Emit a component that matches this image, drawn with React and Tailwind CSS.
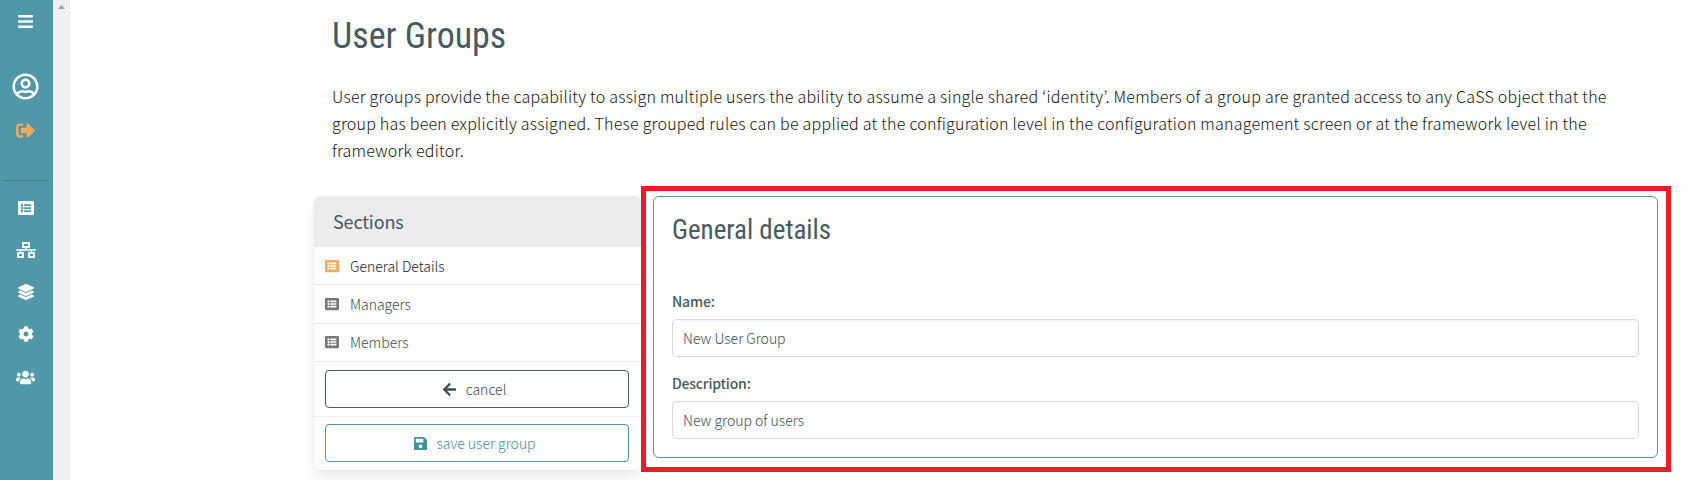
import React from 'react';
import { FaBars, FaRegUserCircle, FaSignOutAlt, FaListAlt, FaNetworkWired, FaLayerGroup, FaCog, FaUsers, FaArrowLeft, FaSave } from 'react-icons/fa';

function SectionRow({ label, active }) {
  return (
    <li className="flex h-[38.33px] items-center border-b border-[#ececec] pl-[11px]">
      <FaListAlt className={active ? 'size-[14px] text-[#f0ab61]' : 'size-[14px] text-[#777]'} />
      <span className={active ? 'ml-[11px] pt-[1px] font-light text-[#222]' : 'ml-[11px] pt-[1px] font-light text-[#3a4d53]'}>{label}</span>
    </li>
  );
}

function Field({ label, value }) {
  return (
    <label className="flex flex-col">
      <span className="h-[28px] text-[14px] leading-[20px] font-medium tracking-[-0.2px] text-[#465a61]">{label}</span>
      <input readOnly defaultValue={value} className="h-[38px] rounded-[4px] border border-[#dbdbdb] px-[10px] text-[14px] font-light text-[#3a4d53] shadow-[inset_0_1px_2px_rgba(10,10,10,0.05)]" />
    </label>
  );
}

export default function App() {
  return (
    <div className="flex h-[480px] w-[1708px] overflow-hidden bg-white font-['Noto_Sans_CJK_KR',sans-serif] text-[14px]">
      <nav className="flex w-[53px] shrink-0 flex-col items-center bg-[#5098a8] pr-[2px] text-white">
        <FaBars className="mt-[13px] size-[17px]" />
        <FaRegUserCircle className="mt-[43px] size-[27px]" />
        <FaSignOutAlt className="mt-[21px] size-[19px] text-[#f0ab61]" />
        <hr className="mt-[40px] ml-[1px] w-[46px] border-[#4f7884]" />
        <FaListAlt className="mt-[19px] size-[16px]" />
        <FaNetworkWired className="mt-[26px] h-[16px] w-[20px]" />
        <FaLayerGroup className="mt-[26px] size-[16px]" />
        <FaCog className="mt-[26px] size-[16px]" />
        <FaUsers className="mt-[26px] size-[19px]" />
      </nav>
      <div className="flex w-[17px] shrink-0 justify-center bg-[#f0f0f0] pt-[5px]">
        <svg className="h-[4px] w-[7px]" viewBox="0 0 7 4"><path d="M0 4 3.5 0 7 4z" fill="#a3a3a3" /></svg>
      </div>
      <main className="flex w-[1601px] flex-col pl-[244px]">
        <header className="h-[186px] shrink-0 pl-[18px]">
          <h1 className="pt-[14px] font-['Roboto_Condensed',Roboto,sans-serif] text-[36px] leading-[44px] font-normal text-[#465a61] [font-stretch:75%]">User Groups</h1>
          <p className="mt-[25px] text-[16px] leading-[27px] font-light tracking-[0.24px] whitespace-nowrap text-[#111]">
            User groups provide the capability to assign multiple users the ability to assume a single shared ‘identity’. Members of a group are granted access to any CaSS object that the<br />
            group has been explicitly assigned. These grouped rules can be applied at the configuration level in the configuration management screen or at the framework level in the<br />
            framework editor.
          </p>
        </header>
        <div className="flex items-start">
          <aside className="mt-[10px] h-[274px] w-[327px] rounded-[6px] shadow-[0_8px_16px_-2px_rgba(10,10,10,0.1),0_0_0_1px_rgba(10,10,10,0.02)]">
            <h2 className="flex h-[51px] items-center rounded-t-[6px] bg-[#ececec] pl-[19px] text-[18px] font-normal tracking-[-0.15px] text-[#465a61]">Sections</h2>
            <ul className="h-[115px]">
              <SectionRow label="General Details" active />
              <SectionRow label="Managers" />
              <SectionRow label="Members" />
            </ul>
            <div className="flex h-[55px] flex-col border-b border-[#ececec] pt-[8px] pl-[11px]">
              <button className="flex h-[38px] w-[304px] items-center justify-center gap-[9px] rounded-[4px] border border-[#465a61] pr-[6px] font-light text-[#3a4d53]"><FaArrowLeft className="size-[15px]" />cancel</button>
            </div>
            <div className="flex flex-col pt-[7px] pl-[11px]">
              <button className="flex h-[38px] w-[304px] items-center justify-center gap-[8px] rounded-[4px] border border-[#5098a8] pr-[5px] font-light text-[#4590a0]"><FaSave className="size-[15px]" />save user group</button>
            </div>
          </aside>
          <div className="h-[286px] w-[1030px] shrink-0 border-[5px] border-[#ed1c24] bg-white pt-[5px] pl-[7px]">
            <section className="h-[262px] w-[1005px] rounded-[6px] border border-[#5098a8] px-[18px]">
              <h2 className="pt-[15px] font-['Roboto_Condensed',Roboto,sans-serif] text-[27px] leading-[36px] font-normal text-[#465a61] [font-stretch:75%]">General details</h2>
              <div className="mt-[43px] flex flex-col gap-[16px]">
                <Field label="Name:" value="New User Group" />
                <Field label="Description:" value="New group of users" />
              </div>
            </section>
          </div>
        </div>
      </main>
    </div>
  );
}
